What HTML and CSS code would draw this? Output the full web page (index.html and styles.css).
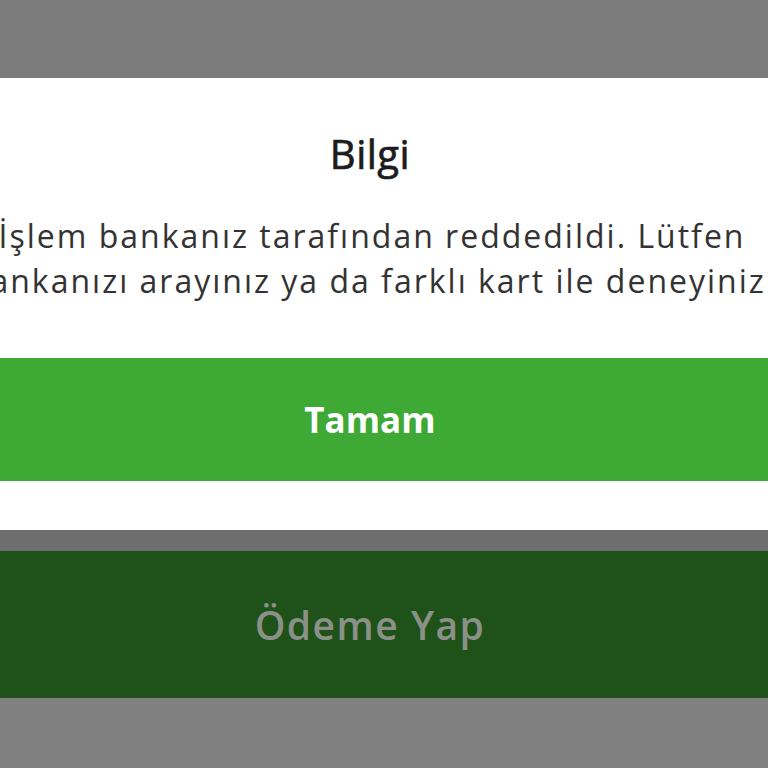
FILE: index.html
```html
<!DOCTYPE html>
<html lang="tr">
<head>
<meta charset="utf-8">
<title>Bilgi</title>
<link rel="stylesheet" href="styles.css">
</head>
<body>
<div class="screen">
  <div class="backdrop-top"></div>
  <div class="dialog">
    <h1 class="dialog-title">Bilgi</h1>
    <p class="dialog-message">İşlem bankanız tarafından reddedildi. Lütfen<br>Bankanızı arayınız ya da farklı kart ile deneyiniz.</p>
    <button class="dialog-button" type="button">Tamam</button>
  </div>
  <div class="backdrop-band"></div>
  <div class="pay-button">Ödeme Yap</div>
  <div class="backdrop-bottom"></div>
</div>
</body>
</html>
```
FILE: styles.css
```css
html, body {
  margin: 0;
  padding: 0;
  height: 100%;
  overflow: hidden;
  background: #808080;
}
body {
  font-family: "Open Sans", "Noto Sans", sans-serif;
}
.screen {
  width: 900px;
  margin-left: -78px;
  display: flex;
  flex-direction: column;
}
.backdrop-top {
  height: 78px;
  background: #7b7b7b;
}
.dialog {
  background: #ffffff;
  padding: 48px 0 49px;
  display: flex;
  flex-direction: column;
  align-items: stretch;
  text-align: center;
}
.dialog-title {
  margin: 0 4px 0 0;
  font-size: 40px;
  font-weight: 400;
  -webkit-text-stroke: 0.7px #1c1c1c;
  letter-spacing: 0.5px;
  color: #1c1c1c;
  line-height: normal;
}
.dialog-message {
  margin: 32px 0 0;
  font-size: 32px;
  line-height: 45px;
  letter-spacing: 2px;
  color: #333333;
  white-space: nowrap;
}
.dialog-button {
  margin: 55px 4px 0 0;
  height: 123px;
  border: 0;
  padding: 0;
  background: #3ea935;
  color: #ffffff;
  font-family: inherit;
  font-size: 35px;
  font-weight: 700;
  line-height: normal;
}
.backdrop-band {
  height: 21px;
  background: #6e6e6e;
}
.pay-button {
  height: 147px;
  padding-right: 4px;
  background: #1f5219;
  color: #8b9089;
  font-size: 39px;
  font-weight: 600;
  letter-spacing: 1.5px;
  display: flex;
  align-items: center;
  justify-content: center;
}
.backdrop-bottom {
  height: 70px;
  background: #808080;
}
```
